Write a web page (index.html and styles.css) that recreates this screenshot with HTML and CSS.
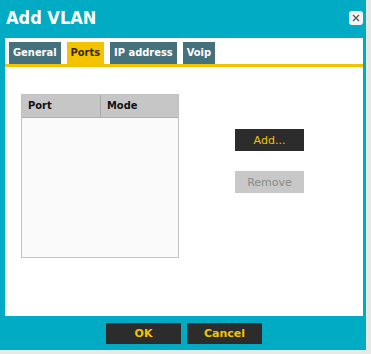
FILE: index.html
```html
<!DOCTYPE html>
<html lang="en">
<head>
    <meta charset="UTF-8">
    <title>Add VLAN</title>
    <link rel="stylesheet" href="styles.css">
</head>
<body>
    <div class="dialog">
        <div class="titlebar">
            <h1>Add VLAN</h1>
            <button class="close" title="Close">
                <svg width="8" height="8" viewBox="0 0 8 8"><path d="M1 1L7 7M7 1L1 7" stroke="#555" stroke-width="1.3"/></svg>
            </button>
        </div>
        <div class="panel">
            <div class="tabs">
                <span class="tab">General</span>
                <span class="tab active">Ports</span>
                <span class="tab">IP address</span>
                <span class="tab">Voip</span>
            </div>
            <div class="content">
                <div class="grid">
                    <div class="grid-head">
                        <div class="col col-port">Port</div>
                        <div class="col">Mode</div>
                    </div>
                    <div class="grid-body"></div>
                </div>
                <div class="actions">
                    <button class="btn">Add...</button>
                    <button class="btn" disabled>Remove</button>
                </div>
            </div>
        </div>
        <div class="footer">
            <button class="btn wide">OK</button>
            <button class="btn wide">Cancel</button>
        </div>
    </div>
</body>
</html>
```

FILE: styles.css
```css
body {
    margin: 0;
    background-color: #e8e8e8;
    font-family: Tahoma, "DejaVu Sans Condensed", "DejaVu Sans", sans-serif;
    width: 371px;
    height: 354px;
    overflow: hidden;
}

.dialog {
    background-color: #00abc3;
    width: 366px;
    height: 350px;
    box-sizing: border-box;
    padding: 0 3px 0 5px;
    display: flex;
    flex-direction: column;
}

.titlebar {
    height: 38px;
    display: flex;
    align-items: center;
    justify-content: space-between;
}

h1 {
    margin: 0 0 4px 1px;
    color: #fff;
    font-size: 18px;
    font-weight: bold;
}

.close {
    width: 14px;
    height: 14px;
    padding: 0;
    margin: 0 0 2px 0;
    border: none;
    border-radius: 3px;
    background-color: #f4f4f4;
    display: flex;
    align-items: center;
    justify-content: center;
}

.panel {
    background-color: #fff;
    height: 278px;
}

.tabs {
    display: flex;
    gap: 6px;
    padding: 4px 0 0 4px;
    border-bottom: 3px solid #f3c300;
}

.tab {
    background-color: #45717d;
    color: #fff;
    font-size: 11px;
    font-weight: bold;
    height: 22px;
    line-height: 21px;
    padding: 0 4px;
}

.tab.active {
    background-color: #f3c300;
    color: #3a2a00;
}

.content {
    display: flex;
    padding: 27px 0 0 16px;
}

.grid {
    width: 158px;
    height: 164px;
    box-sizing: border-box;
    border: 1px solid #c2c2c2;
    background-color: #fafafa;
    display: flex;
    flex-direction: column;
}

.grid-head {
    display: flex;
    height: 22px;
    background-color: #c6c6c6;
    border-bottom: 1px solid #b0b0b0;
}

.col {
    font-size: 11px;
    font-weight: bold;
    color: #111;
    line-height: 21px;
    padding-left: 6px;
}

.col-port {
    width: 72px;
    border-right: 1px solid #aaa;
}

.actions {
    display: flex;
    flex-direction: column;
    gap: 20px;
    padding: 35px 0 0 56px;
}

.btn {
    width: 69px;
    height: 22px;
    border: none;
    background-color: #2c2c2c;
    color: #f3c300;
    font-family: "DejaVu Sans", sans-serif;
    font-size: 11px;
    padding: 0;
}

.btn:disabled {
    background-color: #c8c8c8;
    color: #888;
}

.footer {
    display: flex;
    justify-content: center;
    gap: 6px;
    padding: 7px 0 0 0;
}

.btn.wide {
    width: 75px;
    height: 21px;
    font-weight: bold;
}
```
